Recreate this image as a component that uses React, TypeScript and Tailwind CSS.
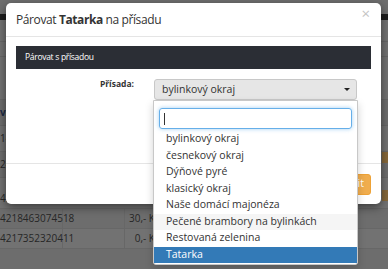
import { useState } from 'react';

const OPTIONS = [
  'bylinkový okraj',
  'česnekový okraj',
  'Dýňové pyré',
  'klasický okraj',
  'Naše domácí majonéza',
  'Pečené brambory na bylinkách',
  'Restovaná zelenina',
  'Tatarka',
];

function Background() {
  return (
    <div className="flex flex-col w-full text-[10px] text-[#262626]">
      <div className="h-[14px] bg-[#6f6f6f]" />
      <div className="h-[6px] bg-[#1d1d1d]" />
      <div className="h-[22px] bg-[#727272] border-b border-[#676767]" />
      <div className="h-[15px] bg-[#727272] border-b border-[#676767]" />
      <div className="h-[43px] bg-[#727272] border-b border-[#676767]" />
      <div className="h-[26px] flex items-center bg-[#6d6d6d] border-b border-[#666] font-bold text-[#1c2a44]">
        <span>vI</span>
      </div>
      <div className="h-[26px] flex items-center bg-[#727272] border-b border-[#676767]">
        <span>14</span>
      </div>
      <div className="h-[26px] flex items-center bg-[#6d6d6d] border-b border-[#676767]">
        <span>24</span>
      </div>
      <div className="h-[31px] flex items-end pb-[2px] bg-[#727272] border-b border-[#676767]">
        <span className="w-[63px]">4218463074518</span>
      </div>
      <div className="h-[20px] flex items-center bg-[#6d6d6d] border-b border-[#676767]">
        <span className="w-[63px] border-r border-[#676767] h-full flex items-center">4218463074518</span>
        <span className="w-[62px] border-r border-[#676767] h-full" />
        <span className="w-[30px] text-right">30,- K</span>
      </div>
      <div className="h-[20px] flex items-center bg-[#727272] border-b border-[#676767]">
        <span className="w-[63px] border-r border-[#676767] h-full flex items-center">4217352320411</span>
        <span className="w-[62px] border-r border-[#676767] h-full" />
        <span className="w-[30px] text-right">0,- K</span>
      </div>
      <div className="h-[30px] bg-[#6d6d6d]" />
    </div>
  );
}

export default function App() {
  const [query] = useState('');
  return (
    <div
      className="relative w-[388px] h-[269px] overflow-hidden bg-[#727272]"
      style={{ fontFamily: '"Open Sans", sans-serif' }}
    >
      <Background />

      {/* badges peeking on the right */}
      <div className="absolute left-[382px] top-[152px] w-[6px] h-[11px] bg-[#86683a]" />
      <div className="absolute left-[382px] top-[190px] w-[6px] h-[11px] bg-[#86683a]" />

      {/* modal */}
      <div className="absolute left-[6px] top-[3px] w-[375px] h-[201px] bg-white rounded-[5px] shadow-[0_3px_10px_rgba(0,0,0,0.5)] flex flex-col">
        <div className="h-[34px] px-[10px] flex items-center justify-between border-b border-[#e5e5e5] shrink-0">
          <h4 className="text-[12px] tracking-[-0.4px] text-[#333] font-normal">
            Párovat <b className="font-bold">Tatarka</b> na přísadu
          </h4>
          <span className="text-[15px] text-[#c4c4c4] leading-none -mt-[12px] mr-[1px]">×</span>
        </div>
        <div className="flex-1 px-[10px] pt-[9px]">
          <div className="h-[23px] bg-[#2b2e35] px-[9px] flex items-center text-[8.5px] tracking-[-0.3px] text-white">
            Párovat s přísadou
          </div>
          <div className="mt-[10px] flex">
            <label className="w-[118px] text-right text-[8.5px] font-bold text-[#333] -mt-[1px]">Přísada:</label>
            <div className="ml-[20px] w-[203px] h-[21px] bg-[#e6e6e6] border border-[#c8c8c8] rounded-[3px] flex items-center justify-between px-[7px] text-[10.5px] text-[#333]">
              <span>bylinkový okraj</span>
              <span className="w-0 h-0 border-l-[3px] border-r-[3px] border-t-[3px] border-l-transparent border-r-transparent border-t-[#222] -mr-[1px]" />
            </div>
          </div>
        </div>
        <div className="h-[41px] border-t border-[#e5e5e5] px-[10px] flex items-center justify-end shrink-0">
          <button className="h-[21px] px-[6px] bg-[#f0ad4e] border border-[#eea236] rounded-[3px] text-white text-[10.5px]">
            Uložit
          </button>
        </div>
      </div>

      {/* open dropdown */}
      <div className="absolute left-[153px] top-[100px] w-[205px] h-[165px] bg-white border border-[#c8c8c8] rounded-b-[3px] shadow-[0_4px_8px_rgba(0,0,0,0.18)] flex flex-col">
        <div className="px-[5px] pt-[7px] pb-[2px]">
          <div className="h-[21px] border border-[#66afe9] rounded-[3px] shadow-[0_0_4px_rgba(102,175,233,0.6)] flex items-center px-[4px] text-[10.5px]">
            {query}
            <span className="w-px h-[12px] bg-[#333]" />
          </div>
        </div>
        <ul className="flex flex-col">
          {OPTIONS.map((o) => (
            <li
              key={o}
              className={
                'h-[16.5px] flex items-center pl-[12px] text-[10.5px] ' +
                (o === 'Tatarka'
                  ? 'bg-[#337ab7] text-white'
                  : o === 'Pečené brambory na bylinkách'
                  ? 'bg-[#f5f5f5] text-[#333]'
                  : 'text-[#333]')
              }
            >
              {o}
            </li>
          ))}
        </ul>
      </div>
    </div>
  );
}
